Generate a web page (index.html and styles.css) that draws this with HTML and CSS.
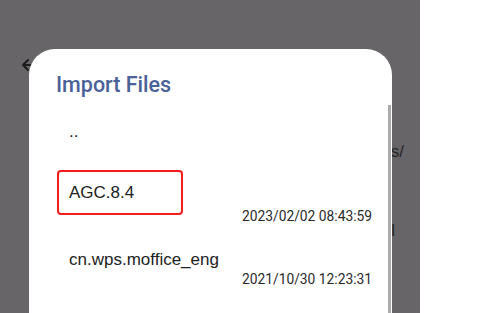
FILE: index.html
```html
<!DOCTYPE html>
<html>
<head>
<meta charset="utf-8">
<link rel="stylesheet" href="styles.css">
</head>
<body>
<div class="screen">
  <div class="page">
    <div class="page-header">
      <svg class="back" width="16" height="16" viewBox="0 0 16 16"><path d="M14 8H3M8 3L3 8l5 5" fill="none" stroke="#1c1c1c" stroke-width="2" stroke-linecap="round" stroke-linejoin="round"/></svg>
    </div>
    <div class="page-body">
      <div class="page-line page-line-path">s/</div>
      <div class="page-line page-line-mid">l</div>
    </div>

    <div class="dialog">
      <h1 class="dialog-title">Import Files</h1>
      <div class="file-list">
        <div class="file parent">
          <div class="file-name">..</div>
        </div>
        <div class="file first">
          <div class="file-name">AGC.8.4</div>
          <div class="file-date">2023/02/02 08:43:59</div>
        </div>
        <div class="file second">
          <div class="file-name">cn.wps.moffice_eng</div>
          <div class="file-date">2021/10/30 12:23:31</div>
        </div>
      </div>
      <div class="highlight"></div>
      <div class="scrollbar"></div>
    </div>
  </div>
  <div class="side"></div>
</div>
</body>
</html>
```

FILE: styles.css
```css
html, body {
  margin: 0;
  padding: 0;
  background: #ffffff;
}

.screen {
  display: flex;
  width: 480px;
  height: 313px;
  overflow: hidden;
}

.page {
  position: relative;
  width: 420px;
  height: 313px;
  background: #676567;
  overflow: hidden;
  font-family: "Liberation Sans", Arial, sans-serif;
}

.side {
  flex: 1;
  background: #ffffff;
}

.page-header {
  padding: 57px 0 0 20px;
  height: 16px;
}

.back {
  display: block;
}

.page-body {
  display: flex;
  flex-direction: column;
  align-items: flex-end;
  padding-right: 16px;
  padding-top: 69px;
  color: #262626;
  font-size: 17px;
  line-height: 20px;
}

.page-line-mid {
  margin-top: 59px;
  margin-right: 9px;
}

.dialog {
  position: absolute;
  left: 29px;
  top: 49px;
  width: 363px;
  bottom: 0;
  background: #ffffff;
  border-radius: 26px 26px 0 0;
}

.dialog-title {
  margin: 22px 0 0 27px;
  font-family: Roboto, "Noto Sans", sans-serif;
  font-weight: 500;
  font-size: 21.5px;
  line-height: 28px;
  color: #4a6197;
}

.file-list {
  display: flex;
  flex-direction: column;
  padding: 0 20px 0 40px;
}

.file {
  display: flex;
  flex-direction: column;
}

.file-name {
  font-family: "Liberation Sans", Arial, sans-serif;
  font-size: 17px;
  line-height: 20px;
  color: #222222;
}

.file-date {
  align-self: flex-end;
  font-family: Roboto, "Noto Sans", sans-serif;
  font-size: 13.8px;
  line-height: 16px;
  color: #2a2a2a;
}

.parent {
  margin-top: 23px;
}

.first {
  margin-top: 41px;
}

.first .file-date {
  margin-top: 5px;
}

.second {
  margin-top: 26px;
}

.second .file-date {
  margin-top: 1px;
}

.highlight {
  position: absolute;
  left: 28px;
  top: 121px;
  width: 126px;
  height: 45px;
  box-sizing: border-box;
  border: 2.5px solid #f41c1c;
  border-radius: 4px;
}

.scrollbar {
  position: absolute;
  right: 1px;
  top: 56px;
  bottom: 0;
  width: 3px;
  background: #ababab;
}
```
